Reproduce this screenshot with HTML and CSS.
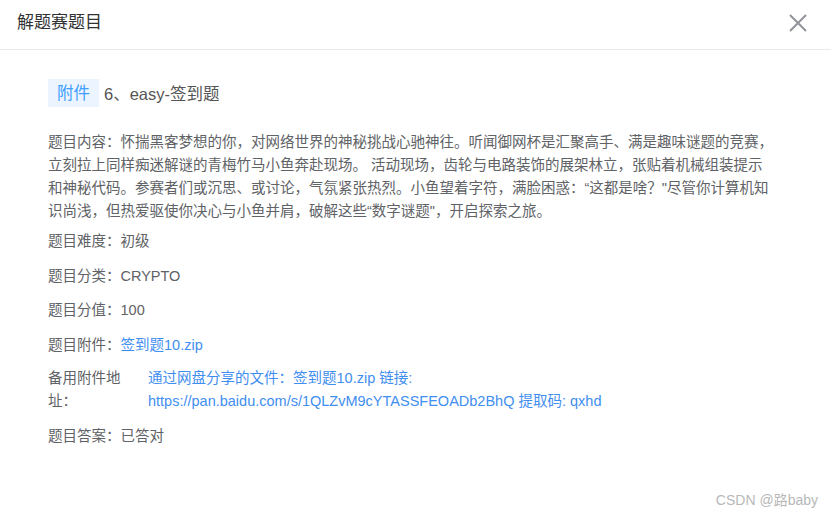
FILE: index.html
```html
<!DOCTYPE html>
<html lang="zh-CN">
<head>
<meta charset="utf-8">
<title>解题赛题目</title>
<link rel="stylesheet" href="styles.css">
</head>
<body>
<div class="dialog">
  <header class="dialog-header">
    <h1 class="dialog-title">解题赛题目</h1>
    <button class="close-btn" aria-label="关闭">
      <svg width="18" height="18" viewBox="0 0 18 18"><path d="M1 1 L17 17 M17 1 L1 17" stroke="#909399" stroke-width="2" fill="none"/></svg>
    </button>
  </header>
  <main class="dialog-body">
    <div class="title-row">
      <span class="tag">附件</span>
      <span class="challenge-name">6、easy-签到题</span>
    </div>
    <p class="content">题目内容：怀揣黑客梦想的你，对网络世界的神秘挑战心驰神往。听闻御网杯是汇聚高手、满是趣味谜题的竞赛，立刻拉上同样痴迷解谜的青梅竹马小鱼奔赴现场。 活动现场，齿轮与电路装饰的展架林立，张贴着机械组装提示和神秘代码。参赛者们或沉思、或讨论，气氛紧张热烈。小鱼望着字符，满脸困惑：“这都是啥？"尽管你计算机知识尚浅，但热爱驱使你决心与小鱼并肩，破解这些“数字谜题"，开启探索之旅。</p>
    <div class="info-row">题目难度：初级</div>
    <div class="info-row">题目分类：CRYPTO</div>
    <div class="info-row">题目分值：100</div>
    <div class="info-row">题目附件：<a class="link" href="#">签到题10.zip</a></div>
    <div class="info-row split">
      <span class="label">备用附件地址：</span>
      <a class="link value" href="#">通过网盘分享的文件：签到题10.zip 链接: https://pan.baidu.com/s/1QLZvM9cYTASSFEOADb2BhQ 提取码: qxhd</a>
    </div>
    <div class="info-row">题目答案：已答对</div>
  </main>
  <div class="watermark">CSDN @路baby</div>
</div>
</body>
</html>
```
FILE: styles.css
```css
* { box-sizing: border-box; }
html, body { margin: 0; padding: 0; background: #fff; }
body {
  font-family: "Liberation Sans", "Noto Sans CJK SC", sans-serif;
  color: #606266;
  width: 831px;
  height: 516px;
  overflow: hidden;
}
.dialog { position: relative; height: 516px; }
.dialog-header {
  height: 50px;
  border-bottom: 1px solid #e8eaee;
  display: flex;
  align-items: center;
  justify-content: space-between;
  padding: 0 24px 0 17px;
}
.dialog-title {
  margin: 0;
  font-size: 17px;
  font-weight: normal;
  color: #303133;
  line-height: 24px;
  padding-bottom: 3px;
}
.close-btn {
  border: 0;
  background: none;
  padding: 0;
  width: 18px;
  height: 18px;
  display: flex;
  cursor: pointer;
  margin-bottom: 3px;
}
.dialog-body { padding: 29px 48px 0 48px; font-size: 14.5px; }
.title-row { display: flex; align-items: center; gap: 5px; }
.tag {
  background: #ecf5ff;
  color: #409eff;
  font-size: 16.5px;
  line-height: 28px;
  padding: 0 9px;
}
.challenge-name { font-size: 16.5px; color: #555; }
.content {
  margin: 24px 0 0;
  line-height: 23px;
  width: 725px;
}
.info-row { line-height: 24px; margin-top: 10.5px; }
.content + .info-row { margin-top: 6px; }
.split { display: flex; line-height: 23px; }
.label { width: 80px; flex: none; margin-right: 20px; }
.value { display: block; width: 470px; }
.link { color: #3f8ef0; text-decoration: none; }
.watermark {
  position: absolute;
  right: 13px;
  bottom: 7px;
  font-size: 14px;
  color: #b8b8b8;
}
```
